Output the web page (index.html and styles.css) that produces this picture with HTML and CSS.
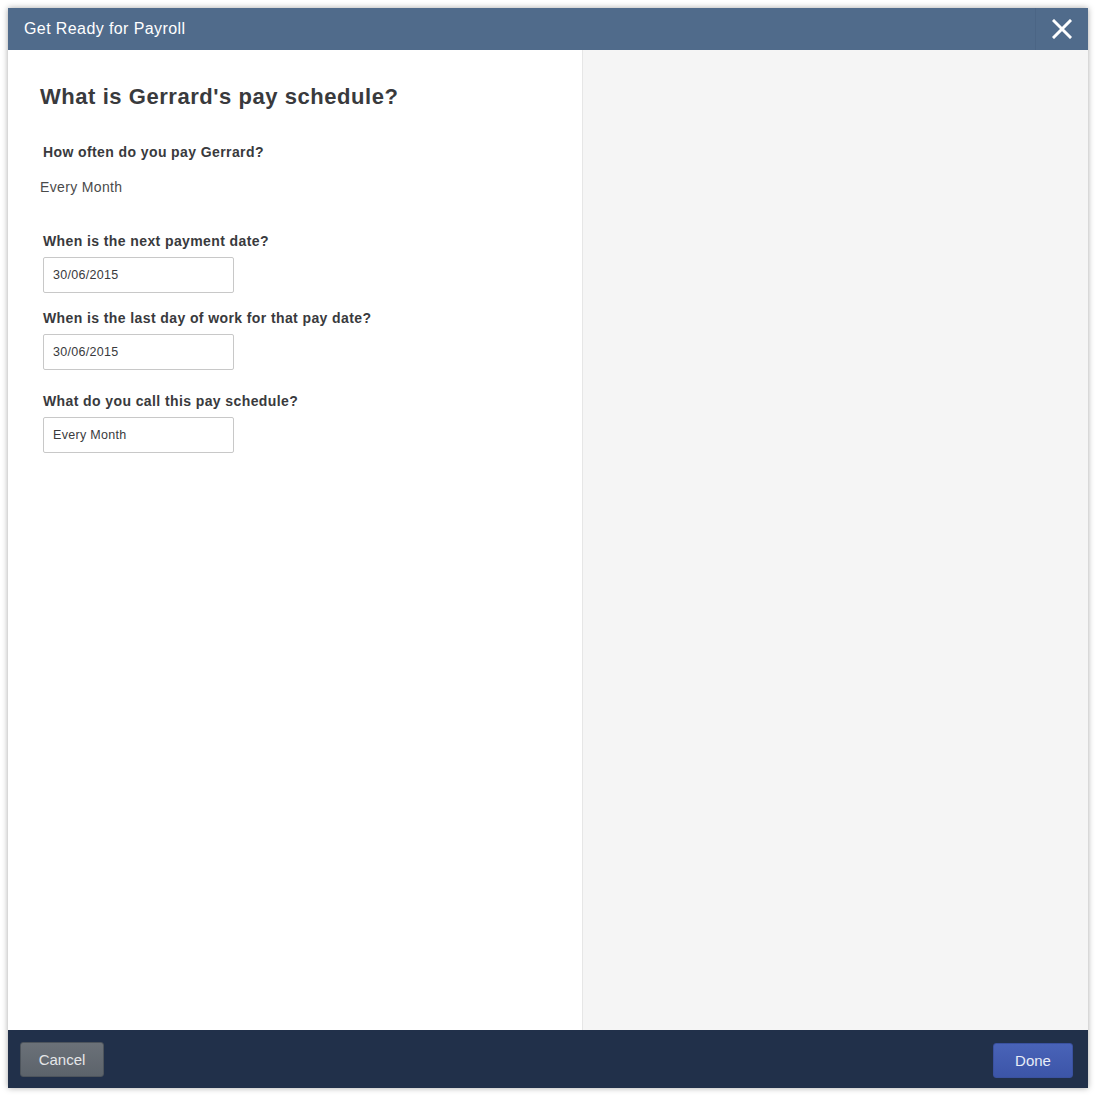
FILE: index.html
```html
<!DOCTYPE html>
<html lang="en">
<head>
    <meta charset="UTF-8">
    <title>Get Ready for Payroll</title>
    <link rel="stylesheet" href="styles.css">
</head>
<body>
    <div class="modal">
        <header class="modal-head">
            <span class="modal-title">Get Ready for Payroll</span>
            <button class="close" aria-label="Close">
                <svg width="20" height="20" viewBox="0 0 20 20">
                    <path d="M2 2 L18 18 M18 2 L2 18" stroke="#fff" stroke-width="3" stroke-linecap="square"/>
                </svg>
            </button>
        </header>

        <div class="modal-body">
            <section class="form-pane">
                <h1>What is Gerrard's pay schedule?</h1>
                <p class="label">How often do you pay Gerrard?</p>
                <p class="value">Every Month</p>

                <div class="field first">
                    <label>When is the next payment date?</label>
                    <input type="text" value="30/06/2015">
                </div>
                <div class="field">
                    <label>When is the last day of work for that pay date?</label>
                    <input type="text" value="30/06/2015">
                </div>
                <div class="field last">
                    <label>What do you call this pay schedule?</label>
                    <input type="text" value="Every Month">
                </div>
            </section>
            <aside class="side-pane"></aside>
        </div>

        <footer class="modal-foot">
            <button class="btn cancel">Cancel</button>
            <button class="btn done">Done</button>
        </footer>
    </div>
</body>
</html>
```

FILE: styles.css
```css
* {
    margin: 0;
    padding: 0;
    box-sizing: border-box;
}
body {
    background: #fff;
    padding: 8px;
    font-family: "Liberation Sans", Arial, sans-serif;
    color: #393a3d;
}
.modal {
    width: 1080px;
    height: 1080px;
    display: flex;
    flex-direction: column;
    box-shadow: 0 0 6px rgba(0,0,0,0.35);
}
.modal-head {
    height: 42px;
    background: #506b8b;
    display: flex;
    align-items: center;
    justify-content: space-between;
}
.modal-title {
    color: #fff;
    font-size: 16px;
    letter-spacing: 0.4px;
    padding-left: 16px;
}
.close {
    width: 53px;
    height: 42px;
    border: none;
    border-left: 1px solid #4b6585;
    background: transparent;
    display: flex;
    align-items: center;
    justify-content: center;
}
.modal-body {
    flex: 1;
    display: flex;
}
.form-pane {
    width: 574px;
    background: #fff;
    padding: 33px 0 0 32px;
}
.side-pane {
    flex: 1;
    background: #f5f5f5;
    border-left: 1px solid #e6e6e6;
}
h1 {
    font-size: 22px;
    line-height: 28px;
    letter-spacing: 0.55px;
    font-weight: bold;
    color: #393a3d;
}
.label, label {
    display: block;
    font-size: 14px;
    line-height: 18px;
    letter-spacing: 0.4px;
    font-weight: bold;
    color: #393a3d;
    padding-left: 3px;
}
.label {
    margin-top: 32px;
}
.value {
    margin-top: 17px;
    font-size: 14px;
    line-height: 18px;
    letter-spacing: 0.35px;
    color: #4a4a4a;
}
.field {
    margin-top: 16px;
}
.field.first {
    margin-top: 36px;
}
.field.last {
    margin-top: 22px;
}
.field input {
    display: block;
    margin: 7px 0 0 3px;
    width: 191px;
    height: 36px;
    border: 1px solid #c8c8c8;
    border-radius: 2px;
    padding: 0 9px;
    font-family: "Liberation Sans", Arial, sans-serif;
    font-size: 12.5px;
    letter-spacing: 0.3px;
    color: #393a3d;
}
.modal-foot {
    height: 58px;
    background: #21304a;
    display: flex;
    align-items: center;
    justify-content: space-between;
    padding: 0 15px 0 12px;
}
.btn {
    height: 35px;
    border: none;
    border-radius: 3px;
    font-family: "Liberation Sans", Arial, sans-serif;
    font-size: 15px;
}
.cancel {
    width: 84px;
    background: linear-gradient(#6b7178, #5c636b);
    color: #e4e6e8;
    border: 1px solid #4d545c;
}
.done {
    width: 80px;
    margin-top: 2px;
    background: linear-gradient(#4963b8, #3c55a8);
    color: #e8ecf7;
    border: 1px solid #3a51a0;
}
```
